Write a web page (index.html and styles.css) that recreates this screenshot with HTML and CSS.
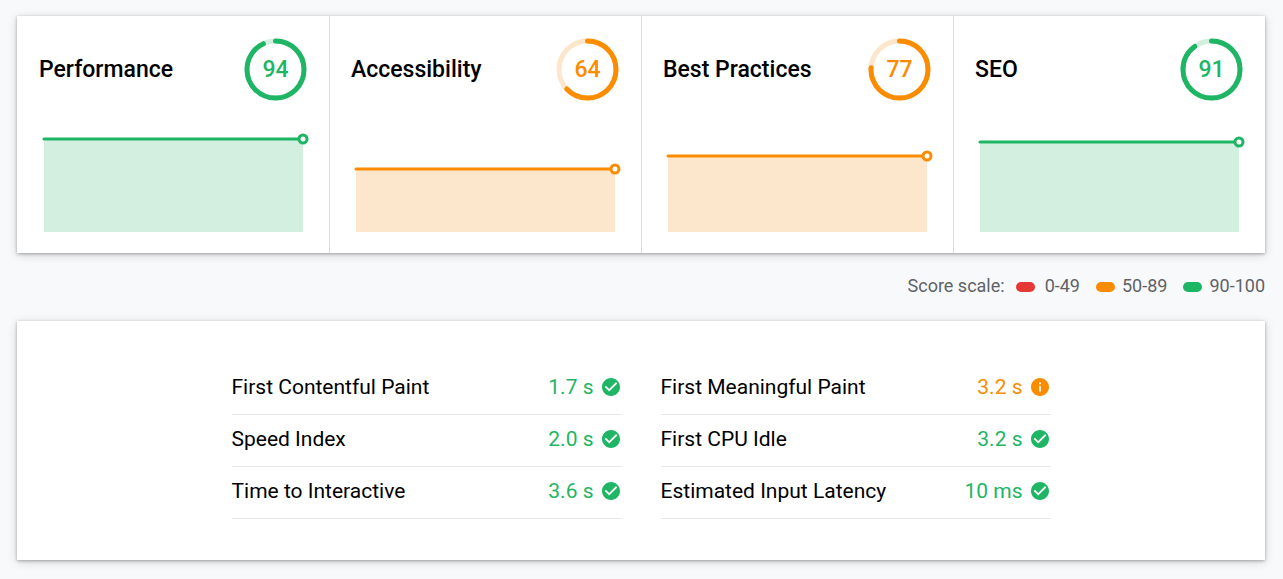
FILE: index.html
```html
<!DOCTYPE html>
<html lang="en">
<head>
<meta charset="utf-8">
<meta name="viewport" content="width=device-width, initial-scale=1">
<title>Audit scores</title>
<link rel="stylesheet" href="styles.css">
</head>
<body>
<svg class="sprite" aria-hidden="true">
  <symbol id="check" viewBox="2 2 20 20"><path fill="currentColor" d="M12 2C6.48 2 2 6.48 2 12s4.48 10 10 10 10-4.48 10-10S17.52 2 12 2zm-2 15l-5-5 1.41-1.41L10 14.17l7.59-7.59L19 8l-9 9z"/></symbol>
  <symbol id="info" viewBox="2 2 20 20"><path fill="currentColor" d="M12 2C6.48 2 2 6.48 2 12s4.48 10 10 10 10-4.48 10-10S17.52 2 12 2zm1 15h-2v-6h2v6zm0-8h-2V7h2v2z"/></symbol>
</svg>
<main class="report">
  <section class="panel scores">
    <article class="score pass">
      <header class="score-head">
        <h2 class="score-title">Performance</h2>
        <div class="gauge">
          <svg class="gauge-ring" viewBox="0 0 63 63" aria-hidden="true"><circle class="track" cx="31.5" cy="31.5" r="28.5"/><circle class="arc" cx="31.5" cy="31.5" r="28.5" pathLength="100" stroke-dasharray="93 100"/></svg>
          <span class="gauge-value">94</span>
        </div>
      </header>
      <svg class="chart" aria-hidden="true"><rect class="area" y="7" width="100%" height="93"/><line class="trend" x1="0" x2="100%" y1="7" y2="7"/><circle class="point" cx="100%" cy="7" r="4"/></svg>
    </article>
    <article class="score average">
      <header class="score-head">
        <h2 class="score-title">Accessibility</h2>
        <div class="gauge">
          <svg class="gauge-ring" viewBox="0 0 63 63" aria-hidden="true"><circle class="track" cx="31.5" cy="31.5" r="28.5"/><circle class="arc" cx="31.5" cy="31.5" r="28.5" pathLength="100" stroke-dasharray="63 100"/></svg>
          <span class="gauge-value">64</span>
        </div>
      </header>
      <svg class="chart" aria-hidden="true"><rect class="area" y="37" width="100%" height="63"/><line class="trend" x1="0" x2="100%" y1="37" y2="37"/><circle class="point" cx="100%" cy="37" r="4"/></svg>
    </article>
    <article class="score average">
      <header class="score-head">
        <h2 class="score-title">Best Practices</h2>
        <div class="gauge">
          <svg class="gauge-ring" viewBox="0 0 63 63" aria-hidden="true"><circle class="track" cx="31.5" cy="31.5" r="28.5"/><circle class="arc" cx="31.5" cy="31.5" r="28.5" pathLength="100" stroke-dasharray="76 100"/></svg>
          <span class="gauge-value">77</span>
        </div>
      </header>
      <svg class="chart" aria-hidden="true"><rect class="area" y="24" width="100%" height="76"/><line class="trend" x1="0" x2="100%" y1="24" y2="24"/><circle class="point" cx="100%" cy="24" r="4"/></svg>
    </article>
    <article class="score pass">
      <header class="score-head">
        <h2 class="score-title">SEO</h2>
        <div class="gauge">
          <svg class="gauge-ring" viewBox="0 0 63 63" aria-hidden="true"><circle class="track" cx="31.5" cy="31.5" r="28.5"/><circle class="arc" cx="31.5" cy="31.5" r="28.5" pathLength="100" stroke-dasharray="90 100"/></svg>
          <span class="gauge-value">91</span>
        </div>
      </header>
      <svg class="chart" aria-hidden="true"><rect class="area" y="10" width="100%" height="90"/><line class="trend" x1="0" x2="100%" y1="10" y2="10"/><circle class="point" cx="100%" cy="10" r="4"/></svg>
    </article>
  </section>

  <div class="legend">
    <span class="legend-label">Score scale:</span>
    <ul class="legend-list">
      <li class="legend-item fail">0-49</li>
      <li class="legend-item average">50-89</li>
      <li class="legend-item pass">90-100</li>
    </ul>
  </div>

  <section class="panel metrics">
    <dl class="metric-grid">
      <div class="metric pass"><dt>First Contentful Paint</dt><dd>1.7 s <svg class="icon" aria-hidden="true"><use href="#check"/></svg></dd></div>
      <div class="metric average"><dt>First Meaningful Paint</dt><dd>3.2 s <svg class="icon" aria-hidden="true"><use href="#info"/></svg></dd></div>
      <div class="metric pass"><dt>Speed Index</dt><dd>2.0 s <svg class="icon" aria-hidden="true"><use href="#check"/></svg></dd></div>
      <div class="metric pass"><dt>First CPU Idle</dt><dd>3.2 s <svg class="icon" aria-hidden="true"><use href="#check"/></svg></dd></div>
      <div class="metric pass"><dt>Time to Interactive</dt><dd>3.6 s <svg class="icon" aria-hidden="true"><use href="#check"/></svg></dd></div>
      <div class="metric pass"><dt>Estimated Input Latency</dt><dd>10 ms <svg class="icon" aria-hidden="true"><use href="#check"/></svg></dd></div>
    </dl>
  </section>
</main>
</body>
</html>
```

FILE: styles.css
```css
* { box-sizing: border-box; }

body {
  margin: 0;
  background: #f8f9fb;
  color: #000;
  font-family: Roboto, "Liberation Sans", sans-serif;
  font-size: 21px;
  line-height: 24px;
}

.sprite { display: none; }

.report { padding: 16px 18px 18px 17px; }

.pass { --tone: #1eb564; --tint: #d2efe0; }
.average { --tone: #fb8c00; --tint: #fde7cc; }
.fail { --tone: #e53935; }

.panel {
  background: #fff;
  box-shadow: 0 1px 3px rgba(0, 0, 0, 0.3), 0 2px 10px rgba(0, 0, 0, 0.14);
}

.scores {
  display: grid;
  grid-template-columns: repeat(4, 1fr);
}

.score {
  padding: 22px 22px 21px;
}

.score + .score {
  padding-left: 21px;
  border-left: 1px solid #dadce0;
}

.score-head {
  display: flex;
  align-items: center;
  justify-content: space-between;
}

.score-title {
  margin: 0;
  font-size: 23px;
  font-weight: 500;
  line-height: 28px;
}

.gauge {
  display: grid;
  place-items: center;
  color: var(--tone);
}

.gauge-ring, .gauge-value { grid-area: 1 / 1; }

.gauge-ring {
  width: 63px;
  height: 63px;
  transform: rotate(-90deg);
}

.gauge-value {
  font-size: 23px;
  font-weight: 500;
  line-height: 28px;
}

.track, .arc {
  fill: none;
  stroke-width: 5;
}

.track { stroke: var(--tint); }

.arc {
  stroke: var(--tone);
  stroke-linecap: round;
}

.chart {
  display: block;
  width: calc(100% - 9px);
  height: 100px;
  margin: 31px 4px 0 5px;
  overflow: visible;
}

.area { fill: var(--tint); }

.trend {
  stroke: var(--tone);
  stroke-width: 3;
  stroke-linecap: round;
}

.point {
  fill: #fff;
  stroke: var(--tone);
  stroke-width: 3;
}

.legend {
  display: flex;
  justify-content: flex-end;
  gap: 11px;
  padding: 21px 0 23px;
  color: #5f6368;
  font-size: 18px;
}

.legend-list {
  display: flex;
  gap: 16px;
  margin: 0;
  padding: 0;
  list-style: none;
}

.legend-item {
  display: flex;
  align-items: center;
  gap: 7px;
}

.legend-item.fail { gap: 10px; }

.legend-item::before {
  content: "";
  width: 19px;
  height: 10px;
  margin-top: 2px;
  border-radius: 5px;
  background: var(--tone);
}

.metrics { padding: 42px 24px 41px; }

.metric-grid {
  display: grid;
  grid-template-columns: 1fr 1fr;
  column-gap: 39px;
  max-width: 819px;
  margin: 0 auto;
}

.metric {
  display: flex;
  justify-content: space-between;
  padding: 12px 2px 15px 0;
  border-bottom: 1px solid #e6e8e9;
}

.metric dd {
  display: flex;
  align-items: center;
  gap: 8px;
  margin: 0;
  color: var(--tone);
}

.icon {
  width: 18px;
  height: 18px;
}
```
